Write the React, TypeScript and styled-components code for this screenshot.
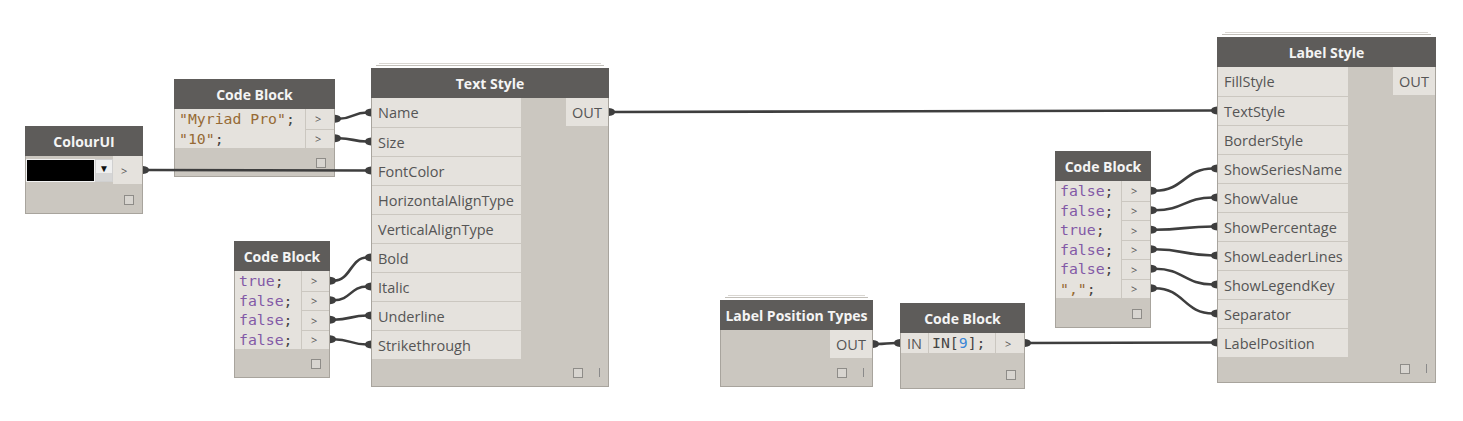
import React from "react";
import styled, { createGlobalStyle, css } from "styled-components";

const Global = createGlobalStyle`
  html, body { margin: 0; padding: 0; background: #ffffff; }
  body { font-family: "Open Sans", "Noto Sans", sans-serif; }
`;

const C = {
  header: "#5e5c5a",
  body: "#cbc7c0",
  cell: "#e5e2dd",
  sep: "#cbc7c0",
  border: "#a8a49d",
  text: "#555555",
  wire: "#3e3e3e",
  str: "#966a35",
  kw: "#8259a6",
  num: "#3a86d6",
};

const ROW = 29;
const CODE = 19.5;

const Canvas = styled.div`
  position: relative;
  width: 1463px;
  height: 421px;
  overflow: hidden;
  background: #ffffff;
`;

const Node = styled.div<{ $x: number; $y: number; $w: number; $stack?: boolean }>`
  position: absolute;
  left: ${(p) => p.$x}px;
  top: ${(p) => p.$y}px;
  width: ${(p) => p.$w}px;
  box-sizing: border-box;
  border: 1px solid ${C.border};
  background: ${C.body};
  display: flex;
  flex-direction: column;
  ${(p) =>
    p.$stack &&
    css`
      &::before,
      &::after {
        content: "";
        position: absolute;
        height: 1px;
      }
      &::before {
        top: -4px;
        left: 4px;
        right: 4px;
        background: #c2bfb9;
      }
      &::after {
        top: -6px;
        left: 7px;
        right: 7px;
        background: #d9d6d1;
      }
    `}
`;

const Header = styled.div`
  margin: -1px -1px 0;
  height: 30px;
  padding-top: 1px;
  box-sizing: border-box;
  background: ${C.header};
  color: #f4f4f4;
  font: 700 14px "Open Sans", "Noto Sans", sans-serif;
  display: flex;
  align-items: center;
  justify-content: center;
  white-space: nowrap;
`;

const FuncBody = styled.div<{ $in: number; $out: number }>`
  display: grid;
  grid-template-columns: ${(p) => p.$in}px 1fr ${(p) => p.$out}px;
  align-items: start;
`;

const InCol = styled.div`
  display: flex;
  flex-direction: column;
`;

const InRow = styled.div`
  height: ${ROW}px;
  box-sizing: border-box;
  background: ${C.cell};
  padding-left: 6px;
  display: flex;
  align-items: center;
  font-size: 14.5px;
  color: ${C.text};
  white-space: nowrap;
  & + & {
    border-top: 1px solid ${C.sep};
  }
`;

const OutCell = styled.div`
  grid-column: 3;
  height: 28px;
  background: ${C.cell};
  display: flex;
  align-items: center;
  justify-content: center;
  font-size: 14.5px;
  color: ${C.text};
`;

const OutOnlyBody = styled.div`
  display: flex;
  justify-content: flex-end;
`;

const OutBox = styled.div<{ $w: number }>`
  width: ${(p) => p.$w}px;
  height: 28px;
  background: ${C.cell};
  display: flex;
  align-items: center;
  justify-content: center;
  font-size: 14.5px;
  color: ${C.text};
`;

const Footer = styled.div<{ $h: number }>`
  height: ${(p) => p.$h}px;
  display: flex;
  justify-content: flex-end;
  align-items: flex-end;
  gap: 16px;
  padding: 0 8px 8px;
  box-sizing: border-box;
`;

const PreviewBox = styled.span`
  width: 10px;
  height: 10px;
  box-sizing: border-box;
  border: 1px solid #8e8c88;
  background: #d8d5d0;
`;

const Lacing = styled.span`
  width: 1px;
  height: 9px;
  margin-bottom: 1px;
  background: #8a8a8a;
`;

const CodeBody = styled.div<{ $code: number }>`
  display: grid;
  grid-template-columns: ${(p) => p.$code}px 1fr;
  column-gap: 1px;
`;

const CodeArea = styled.div`
  background: ${C.cell};
  padding-left: 4px;
  font: 400 14.8px/${CODE}px "DejaVu Sans Mono", "Liberation Mono", monospace;
  color: #444444;
  white-space: pre;
`;

const CodeLine = styled.div`
  height: ${CODE}px;
`;

const Str = styled.span`
  color: ${C.str};
`;
const Kw = styled.span`
  color: ${C.kw};
`;
const Num = styled.span`
  color: ${C.num};
`;

const PortCol = styled.div`
  display: flex;
  flex-direction: column;
`;

const PortCell = styled.div`
  height: ${CODE}px;
  box-sizing: border-box;
  background: ${C.cell};
  display: flex;
  align-items: center;
  padding-left: 9px;
  font: 400 11px "Open Sans", sans-serif;
  color: #555;
  & + & {
    border-top: 1px solid ${C.sep};
  }
`;

const InlineRow = styled.div`
  display: grid;
  grid-template-columns: 27px 66px 1fr;
  column-gap: 1px;
  height: 20px;
`;

const InLabel = styled.div`
  background: ${C.cell};
  display: flex;
  align-items: center;
  justify-content: center;
  font-size: 14.5px;
  color: ${C.text};
`;

const InlineCode = styled(CodeArea)`
  line-height: 20px;
  padding-left: 3px;
`;

const InlinePort = styled(PortCell)`
  height: 20px;
`;

const ColourRow = styled.div`
  display: flex;
  height: 28px;
`;

const SwatchWrap = styled.div`
  flex: 1;
  display: flex;
  align-items: flex-start;
  padding-top: 3px;
`;

const Swatch = styled.div`
  width: 69px;
  height: 23px;
  box-sizing: border-box;
  border: 1px solid #f2f2f2;
  background: #000000;
`;

const Drop = styled.div`
  width: 18px;
  height: 23px;
  box-sizing: border-box;
  border: 1px solid #d0d0d0;
  background: linear-gradient(#efefef 0, #efefef 62%, #d6d6d6 62%, #d6d6d6 100%);
  display: flex;
  justify-content: center;
  padding-top: 3px;
  font-size: 10px;
  line-height: 11px;
  color: #111;
`;

const ColourOut = styled.div`
  width: 29px;
  background: ${C.cell};
  display: flex;
  align-items: center;
  padding-left: 8px;
  box-sizing: border-box;
  font: 400 11px "Open Sans", sans-serif;
  color: #555;
`;

const Wires = styled.svg`
  position: absolute;
  left: 0;
  top: 0;
  z-index: 2;
  pointer-events: none;
`;

/* ---------- layout constants ---------- */
const TS = { x: 371, y: 68, w: 238, inW: 149, outW: 42 };
const LS = { x: 1217, y: 37, w: 219, inW: 130, outW: 42 };
const CU = { x: 25, y: 126, w: 118 };
const CB1 = { x: 174, y: 79, w: 161, code: 130 };
const CB2 = { x: 234, y: 241, w: 96, code: 66 };
const CB4 = { x: 1055, y: 151, w: 96, code: 65 };
const LPT = { x: 720, y: 300, w: 153 };
const CB3 = { x: 900, y: 303, w: 125 };

const tsInputs = [
  "Name",
  "Size",
  "FontColor",
  "HorizontalAlignType",
  "VerticalAlignType",
  "Bold",
  "Italic",
  "Underline",
  "Strikethrough",
];
const lsInputs = [
  "FillStyle",
  "TextStyle",
  "BorderStyle",
  "ShowSeriesName",
  "ShowValue",
  "ShowPercentage",
  "ShowLeaderLines",
  "ShowLegendKey",
  "Separator",
  "LabelPosition",
];

const inY = (n: { y: number }, i: number) => n.y + 30 + ROW * i + ROW / 2;
const codeY = (n: { y: number }, i: number) => n.y + 30 + CODE * i + CODE / 2;

type Wire = [number, number, number, number];

const wires: Wire[] = [
  [CU.x + CU.w, 170, TS.x, inY(TS, 2)],
  [CB1.x + CB1.w, codeY(CB1, 0), TS.x, inY(TS, 0)],
  [CB1.x + CB1.w, codeY(CB1, 1), TS.x, inY(TS, 1)],
  ...[0, 1, 2, 3].map(
    (i): Wire => [CB2.x + CB2.w, codeY(CB2, i), TS.x, inY(TS, 5 + i)]
  ),
  [TS.x + TS.w, TS.y + 30 + 14, LS.x, inY(LS, 1)],
  ...[0, 1, 2, 3, 4, 5].map(
    (i): Wire => [CB4.x + CB4.w, codeY(CB4, i), LS.x, inY(LS, 3 + i)]
  ),
  [LPT.x + LPT.w, LPT.y + 30 + 14, CB3.x, CB3.y + 30 + 10],
  [CB3.x + CB3.w, CB3.y + 30 + 10, LS.x, inY(LS, 9)],
];

const wirePath = ([x1, y1, x2, y2]: Wire) => {
  const dx = Math.max((x2 - x1) * 0.5, 10);
  return `M ${x1 + 4} ${y1} C ${x1 + dx} ${y1} ${x2 - dx} ${y2} ${x2 - 4} ${y2}`;
};
const outCap = (x: number, y: number) =>
  `M ${x} ${y - 4} Q ${x + 6} ${y - 3.5} ${x + 6} ${y} Q ${x + 6} ${y + 3.5} ${x} ${y + 4} Z`;
const inCap = (x: number, y: number) =>
  `M ${x} ${y - 4} Q ${x - 6} ${y - 3.5} ${x - 6} ${y} Q ${x - 6} ${y + 3.5} ${x} ${y + 4} Z`;

function StandardFooter({ h, lacing }: { h: number; lacing?: boolean }) {
  return (
    <Footer $h={h}>
      <PreviewBox />
      {lacing && <Lacing />}
    </Footer>
  );
}

function PortList({ n }: { n: number }) {
  return (
    <PortCol>
      {Array.from({ length: n }).map((_, i) => (
        <PortCell key={i}>&gt;</PortCell>
      ))}
    </PortCol>
  );
}

export default function App() {
  return (
    <>
      <Global />
      <Canvas>
        {/* ColourUI */}
        <Node $x={CU.x} $y={CU.y} $w={CU.w}>
          <Header>ColourUI</Header>
          <ColourRow>
            <SwatchWrap>
              <Swatch />
              <Drop>▼</Drop>
            </SwatchWrap>
            <ColourOut>&gt;</ColourOut>
          </ColourRow>
          <StandardFooter h={29} />
        </Node>

        {/* Code Block: font */}
        <Node $x={CB1.x} $y={CB1.y} $w={CB1.w}>
          <Header>Code Block</Header>
          <CodeBody $code={CB1.code}>
            <CodeArea>
              <CodeLine>
                <Str>"Myriad Pro"</Str>;
              </CodeLine>
              <CodeLine>
                <Str>"10"</Str>;
              </CodeLine>
            </CodeArea>
            <PortList n={2} />
          </CodeBody>
          <StandardFooter h={28} />
        </Node>

        {/* Text Style */}
        <Node $x={TS.x} $y={TS.y} $w={TS.w} $stack>
          <Header>Text Style</Header>
          <FuncBody $in={TS.inW} $out={TS.outW}>
            <InCol>
              {tsInputs.map((t) => (
                <InRow key={t}>{t}</InRow>
              ))}
            </InCol>
            <OutCell>OUT</OutCell>
          </FuncBody>
          <StandardFooter h={27} lacing />
        </Node>

        {/* Code Block: booleans */}
        <Node $x={CB2.x} $y={CB2.y} $w={CB2.w}>
          <Header>Code Block</Header>
          <CodeBody $code={CB2.code}>
            <CodeArea>
              <CodeLine>
                <Kw>true</Kw>;
              </CodeLine>
              <CodeLine>
                <Kw>false</Kw>;
              </CodeLine>
              <CodeLine>
                <Kw>false</Kw>;
              </CodeLine>
              <CodeLine>
                <Kw>false</Kw>;
              </CodeLine>
            </CodeArea>
            <PortList n={4} />
          </CodeBody>
          <StandardFooter h={28} />
        </Node>

        {/* Label Position Types */}
        <Node $x={LPT.x} $y={LPT.y} $w={LPT.w} $stack>
          <Header>Label Position Types</Header>
          <OutOnlyBody>
            <OutBox $w={42}>OUT</OutBox>
          </OutOnlyBody>
          <StandardFooter h={28} lacing />
        </Node>

        {/* Code Block: IN[9] */}
        <Node $x={CB3.x} $y={CB3.y} $w={CB3.w}>
          <Header>Code Block</Header>
          <InlineRow>
            <InLabel>IN</InLabel>
            <InlineCode>
              IN[<Num>9</Num>];
            </InlineCode>
            <InlinePort>&gt;</InlinePort>
          </InlineRow>
          <StandardFooter h={35} />
        </Node>

        {/* Code Block: label options */}
        <Node $x={CB4.x} $y={CB4.y} $w={CB4.w}>
          <Header>Code Block</Header>
          <CodeBody $code={CB4.code}>
            <CodeArea>
              <CodeLine>
                <Kw>false</Kw>;
              </CodeLine>
              <CodeLine>
                <Kw>false</Kw>;
              </CodeLine>
              <CodeLine>
                <Kw>true</Kw>;
              </CodeLine>
              <CodeLine>
                <Kw>false</Kw>;
              </CodeLine>
              <CodeLine>
                <Kw>false</Kw>;
              </CodeLine>
              <CodeLine>
                <Str>","</Str>;
              </CodeLine>
            </CodeArea>
            <PortList n={6} />
          </CodeBody>
          <StandardFooter h={29} />
        </Node>

        {/* Label Style */}
        <Node $x={LS.x} $y={LS.y} $w={LS.w} $stack>
          <Header>Label Style</Header>
          <FuncBody $in={LS.inW} $out={LS.outW}>
            <InCol>
              {lsInputs.map((t) => (
                <InRow key={t}>{t}</InRow>
              ))}
            </InCol>
            <OutCell>OUT</OutCell>
          </FuncBody>
          <StandardFooter h={25} lacing />
        </Node>

        <Wires width={1463} height={421} viewBox="0 0 1463 421">
          {wires.map((w, i) => (
            <g key={i}>
              <path d={wirePath(w)} fill="none" stroke={C.wire} strokeWidth={2.6} />
              <path d={outCap(w[0], w[1])} fill={C.wire} />
              <path d={inCap(w[2], w[3])} fill={C.wire} />
            </g>
          ))}
        </Wires>
      </Canvas>
    </>
  );
}
